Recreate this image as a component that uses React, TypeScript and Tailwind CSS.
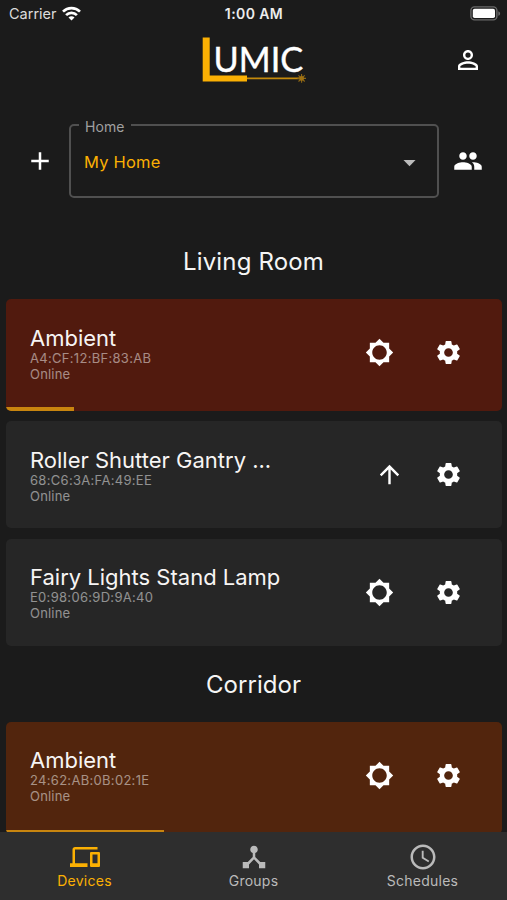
import type { ReactNode } from "react";
import {
  MdAccessTime,
  MdAdd,
  MdArrowDropDown,
  MdArrowUpward,
  MdBrightness5,
  MdDeviceHub,
  MdDevices,
  MdPeople,
  MdPermIdentity,
  MdSettings,
} from "react-icons/md";

function StatusBar() {
  return (
    <div className="grid h-7 grid-cols-3 items-center px-[9px] text-[14.5px] leading-none text-[#dcdcdc]">
      <div className="flex items-center gap-[5px]">
        <span>Carrier</span>
        <svg width="19" height="15" viewBox="0 0 19 15" fill="none" stroke="#fff" strokeWidth="2.7" className="-mt-[2px]">
          <path d="M1 5.6a12.2 12.2 0 0 1 17 0" />
          <path d="M4.1 9.1a7.6 7.6 0 0 1 10.8 0" />
          <path d="M9.5 14.6 6.5 11.6a4.2 4.2 0 0 1 6 0z" fill="#fff" stroke="none" />
        </svg>
      </div>
      <span className="pl-[1px] text-center text-[14px] font-semibold tracking-[0.4px] text-[#ececec]">1:00 AM</span>
      <div className="-mr-[3px] -mt-[2px] flex justify-end">
        <svg width="31" height="15" viewBox="0 0 31 15">
          <rect x="0.9" y="0.9" width="26" height="13" rx="3.6" fill="none" stroke="#6a6a6a" strokeWidth="1.4" />
          <rect x="2.8" y="2.8" width="22.2" height="9.2" rx="1.8" fill="#fff" />
          <path d="M28.3 5.2c2.4.8 2.4 3.8 0 4.6z" fill="#6a6a6a" />
        </svg>
      </div>
    </div>
  );
}

function Logo() {
  return (
    <svg width="106" height="48" viewBox="0 0 106 48" role="img" aria-label="Lumic">
      <path d="M1.7 1.5h7v38h37.3v6H1.7z" fill="#fbb003" />
      <text
        x="12.6"
        y="36.4"
        fontFamily="Lato, sans-serif"
        fontSize="34"
        fill="#fff"
        stroke="#fff"
        strokeWidth="0.4"
        textLength="89.6"
        lengthAdjust="spacingAndGlyphs"
      >
        UMIC
      </text>
      <path d="M46 42.4h53" stroke="#c48a0c" strokeWidth="1.6" />
      <path
        d="M96.5 42.4h8.5M100.6 38v8.8M97.5 39.3l6.2 6.2M97.5 45.5l6.2-6.2"
        stroke="#8f6714"
        strokeWidth="1.1"
      />
      <circle cx="100.6" cy="42.4" r="2.4" fill="#a07213" />
    </svg>
  );
}

function Device({
  name,
  mac,
  color,
  level,
  shutter,
}: {
  name: string;
  mac: string;
  color: string;
  level?: string;
  shutter?: boolean;
}) {
  return (
    <section className={`ml-[6px] mr-[5px] overflow-hidden rounded-[5px] ${color}`}>
      <div className="flex h-[107px] items-center pl-6 pr-[39px]">
        <div className="min-w-0 flex-1 pt-[2px]">
          <h3 className="text-[22px] leading-[24px] text-[#f7f5f4]">{name}</h3>
          <p className="text-[13px] leading-4 tracking-[0.3px] text-white/50">{mac}</p>
          <p className="text-[13px] leading-4 tracking-[0.2px] text-white/50">Online</p>
        </div>
        <div className="flex items-center text-white">
          {shutter ? (
            <MdArrowUpward size={29} className="mr-[30px]" />
          ) : (
            <MdBrightness5 size={29} className="mr-[40px]" />
          )}
          <MdSettings size={29} />
        </div>
      </div>
      {level && (
        <div className="h-[5px] pt-[1px]">
          <div className={`h-1 bg-[#c8850f] ${level}`} />
        </div>
      )}
    </section>
  );
}

function Tab({ label, active, children }: { label: string; active?: boolean; children: ReactNode }) {
  return (
    <div
      className={`flex flex-1 flex-col items-center pt-[10px] text-[14px] leading-[17px] tracking-[0.25px] ${
        active ? "text-[#fbb003]" : "text-[#bababa]"
      }`}
    >
      {children}
      <span>{label}</span>
    </div>
  );
}

export default function App() {
  return (
    <div className="flex h-[900px] w-[507px] flex-col overflow-hidden bg-[#1b1b1b] font-['Inter',sans-serif]">
      <StatusBar />
      <header className="grid h-[64px] grid-cols-3 items-center">
        <span />
        <div className="flex justify-center">
          <Logo />
        </div>
        <div className="flex justify-end pr-[24px] text-white">
          <MdPermIdentity size={30} />
        </div>
      </header>

      <div className="mt-[22px] flex h-[84px] items-center text-white">
        <MdAdd size={30} className="ml-[25px] mr-[14px] mt-[10px] shrink-0" />
        <fieldset className="h-[84px] w-[370px] shrink-0 rounded-[5px] border-2 border-[#505050] px-[8px]">
          <legend className="px-[6px] pt-[4px] text-[14px] leading-[18px] tracking-[0.1px] text-[#a0a0a0]">Home</legend>
          <div className="flex h-[52px] items-center justify-between pl-[5px] pr-[5px]">
            <span className="text-[16.5px] tracking-[0.2px] text-[#fbb003]">My Home</span>
            <MdArrowDropDown size={29} className="text-[#bcbcbc]" />
          </div>
        </fieldset>
        <MdPeople size={30} className="ml-[14px] mt-[10px] shrink-0" />
      </div>

      <main className="flex min-h-0 flex-1 flex-col overflow-hidden">
        <h2 className="mt-[47px] h-[54px] shrink-0 pt-[1px] text-center text-[24px] leading-[32px] tracking-[0.15px] text-[#f5f5f5]">
          Living Room
        </h2>
        <div className="flex shrink-0 flex-col gap-[10.4px]">
          <Device name="Ambient" mac="A4:CF:12:BF:83:AB" color="bg-[#511a0e]" level="w-[68px]" />
          <Device name="Roller Shutter Gantry ..." mac="68:C6:3A:FA:49:EE" color="bg-[#262626]" shutter />
          <Device name="Fairy Lights Stand Lamp" mac="E0:98:06:9D:9A:40" color="bg-[#262626]" />
        </div>
        <h2 className="mt-[22px] h-[54px] shrink-0 pt-[1px] text-center text-[24px] leading-[32px] tracking-[0.05px] text-[#f5f5f5]">
          Corridor
        </h2>
        <div className="shrink-0">
          <Device name="Ambient" mac="24:62:AB:0B:02:1E" color="bg-[#52250d]" level="w-[158px]" />
        </div>
      </main>

      <nav className="flex h-[68px] shrink-0 bg-[#2e2e2e]">
        <Tab label="Devices" active>
          <MdDevices size={30} />
        </Tab>
        <Tab label="Groups">
          <MdDeviceHub size={30} />
        </Tab>
        <Tab label="Schedules">
          <MdAccessTime size={30} />
        </Tab>
      </nav>
    </div>
  );
}
